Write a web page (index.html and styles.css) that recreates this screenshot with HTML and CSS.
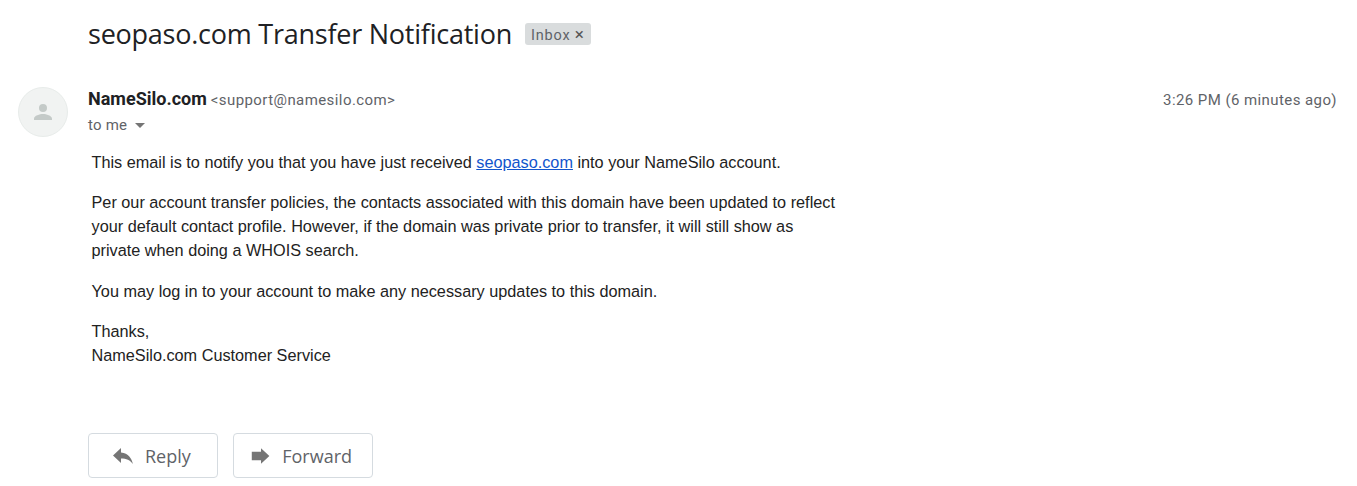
FILE: index.html
```html
<!DOCTYPE html>
<html lang="en">
<head>
<meta charset="utf-8">
<title>seopaso.com Transfer Notification</title>
<link rel="stylesheet" href="styles.css">
</head>
<body>
<main class="mail">
  <header class="subject-row">
    <h1 class="subject">seopaso.com Transfer Notification</h1>
    <span class="label">Inbox <span class="label-x">×</span></span>
  </header>
  <section class="message">
    <div class="avatar">
      <svg viewBox="0 0 24 24" width="24" height="24"><path fill="#c4cac8" d="M12 12a4 4 0 1 0 0-8 4 4 0 0 0 0 8zm0 2c-3.2 0-9 1.600-9 4.700V20h18v-1.300C21 15.600 15.200 14 12 14z"/></svg>
    </div>
    <div class="content">
      <div class="meta">
        <div class="sender"><strong class="name">NameSilo.com</strong> <span class="addr">&lt;support@namesilo.com&gt;</span></div>
        <div class="time">3:26 PM (6 minutes ago)</div>
      </div>
      <div class="to">to me <span class="caret"></span></div>
      <div class="body">
        <p>This email is to notify you that you have just received <a href="#">seopaso.com</a> into your NameSilo account.</p>
        <p>Per our account transfer policies, the contacts associated with this domain have been updated to reflect your default contact profile. However, if the domain was private prior to transfer, it will still show as private when doing a WHOIS search.</p>
        <p>You may log in to your account to make any necessary updates to this domain.</p>
        <p>Thanks,<br>NameSilo.com Customer Service</p>
      </div>
      <div class="actions">
        <button class="btn btn-reply" type="button">
          <svg viewBox="0 0 24 24" width="24" height="24"><path fill="#757575" d="M10 8.500V4L2 11.500 10 19v-4.600c5.400 0 9.200 1.700 11.900 5.600C20.800 14.500 17.500 9.300 10 8.500z"/></svg>
          Reply
        </button>
        <button class="btn btn-forward" type="button">
          <svg viewBox="0 0 24 24" width="24" height="24"><path fill="#757575" d="M13 7.500V3.500l9 8.500-9 8.500v-4H3v-9z"/></svg>
          Forward
        </button>
      </div>
    </div>
  </section>
</main>
</body>
</html>
```
FILE: styles.css
```css
html, body { margin: 0; padding: 0; background: #fff; }
body { font-family: Roboto, "Liberation Sans", sans-serif; color: #222; height: 486px; overflow: hidden; }
.mail { padding-top: 16px; }
.subject-row { display: flex; align-items: center; gap: 13px; padding-left: 88px; height: 36px; }
.subject { margin: 0; font-family: "Open Sans", Roboto, sans-serif; font-weight: 400; font-size: 27px; line-height: 36px; color: #202124; letter-spacing: -0.24px; white-space: nowrap; }
.label { background: #d9dcdd; border-radius: 3px; color: #5f6368; font-size: 14.500px; line-height: 22px; height: 22px; padding: 0 6px; letter-spacing: 0.8px; white-space: nowrap; }
.label-x { font-size: 17px; color: #555; }
.message { display: flex; margin-top: 35px; padding-left: 18px; padding-right: 20px; }
.avatar { width: 50px; height: 50px; flex: none; border-radius: 50%; background: #f1f3f2; border: 1px solid #e8ecea; box-sizing: border-box; display: flex; align-items: center; justify-content: center; }
.content { flex: 1; margin-left: 20px; min-width: 0; }
.meta { display: flex; justify-content: space-between; align-items: baseline; line-height: 24px; height: 24px; }
.name { font-size: 18px; font-weight: 700; color: #202124; }
.addr { font-size: 15px; color: #5f6368; letter-spacing: 0.42px; }
.time { font-size: 15px; color: #5f6368; letter-spacing: 0.42px; }
.to { font-size: 15px; line-height: 24px; height: 24px; margin-top: 2px; color: #5f6368; letter-spacing: 0.2px; display: flex; align-items: center; gap: 8px; }
.caret { width: 0; height: 0; border-left: 5px solid transparent; border-right: 5px solid transparent; border-top: 5px solid #757575; }
.body { font-family: "Liberation Sans", Arial, sans-serif; font-size: 16.250px; line-height: 24px; color: #222; width: 748px; margin-left: 3.5px; margin-top: 12.5px; }
.body p { margin: 0 0 16.500px; }
.body a { color: #1155cc; }
.actions { display: flex; gap: 15px; margin-top: 66px; }
.btn { display: flex; align-items: center; height: 45px; box-sizing: border-box; background: #fff; border: 1px solid #d5dbe0; border-radius: 4px; font-family: "Open Sans", Roboto, sans-serif; font-size: 18px; font-weight: 500; color: #5f6368; padding: 0 20px 0 22px; gap: 10px; }
.btn-reply { width: 130px; }
.btn-forward { width: 140px; padding-left: 15px; gap: 11px; }
```
